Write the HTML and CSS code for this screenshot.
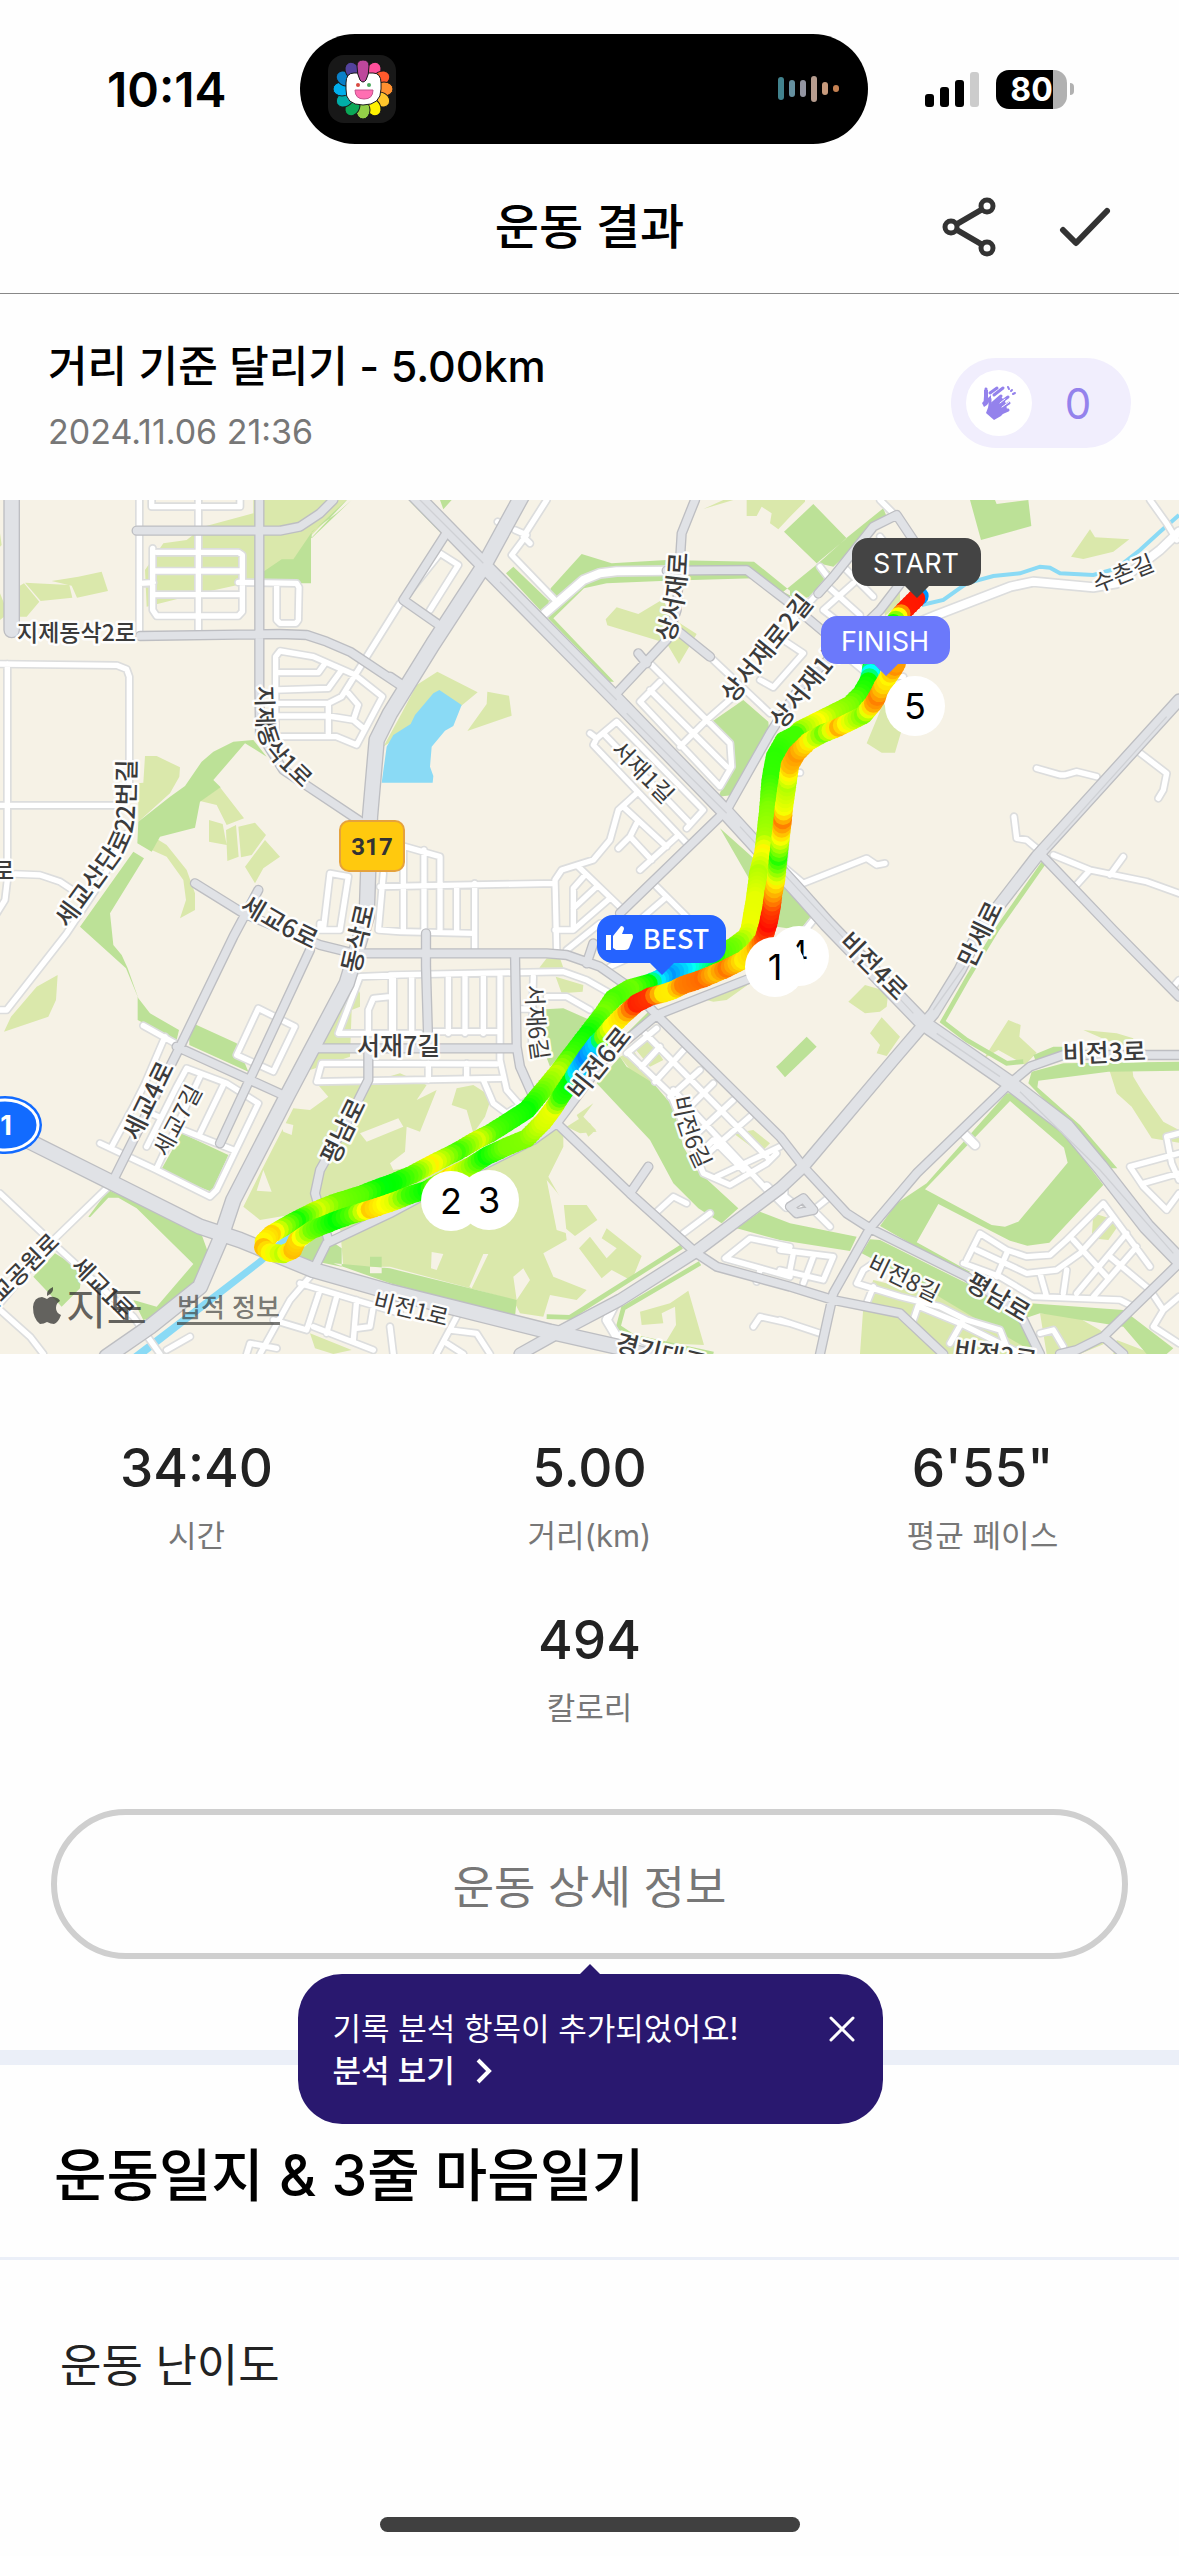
FILE: index.html
```html
<!DOCTYPE html>
<html lang="ko">
<head>
<meta charset="utf-8">
<meta name="viewport" content="width=device-width, initial-scale=1">
<title>운동 결과</title>
<link rel="stylesheet" href="styles.css">
</head>
<body>
<div class="screen">
  <div class="status">
    <span class="status-time">10:14</span>
    <div class="island">
      <svg class="island-app" viewBox="0 0 68 68" aria-hidden="true">
        <rect width="68" height="68" rx="16" fill="#181818"/>
        <g stroke="#181818" stroke-width="1">
          <ellipse cx="35" cy="13" rx="7" ry="9" fill="#ff4f9b" transform="rotate(30 35 34)"/>
          <ellipse cx="35" cy="13" rx="7" ry="9" fill="#ff5a2c" transform="rotate(60 35 34)"/>
          <ellipse cx="35" cy="13" rx="7" ry="9" fill="#ff9030" transform="rotate(90 35 34)"/>
          <ellipse cx="35" cy="13" rx="7" ry="9" fill="#ffc52c" transform="rotate(120 35 34)"/>
          <ellipse cx="35" cy="13" rx="7" ry="9" fill="#fff200" transform="rotate(150 35 34)"/>
          <ellipse cx="35" cy="13" rx="7" ry="9" fill="#93cf48" transform="rotate(180 35 34)"/>
          <ellipse cx="35" cy="13" rx="7" ry="9" fill="#0aa858" transform="rotate(210 35 34)"/>
          <ellipse cx="35" cy="13" rx="7" ry="9" fill="#00ada8" transform="rotate(240 35 34)"/>
          <ellipse cx="35" cy="13" rx="7" ry="9" fill="#00aeec" transform="rotate(270 35 34)"/>
          <ellipse cx="35" cy="13" rx="7" ry="9" fill="#0a80c8" transform="rotate(300 35 34)"/>
          <ellipse cx="35" cy="13" rx="7" ry="9" fill="#53429c" transform="rotate(330 35 34)"/>
          <path d="M18 28Q18 18 26 18H45Q53 18 53 28V34Q53 50 35 50T18 34Z" fill="#fff"/>
          <path d="M29 11Q29 5 35 5T41 11Q41 20 38 25Q35 29 32 25Q29 20 29 11Z" fill="#bd479b"/>
          <path d="M27 35H45Q45 44 36 44T27 35Z" fill="#ff6fb2" stroke="#c4528d"/>
        </g>
        <circle cx="30" cy="30" r="2" fill="#d84a40"/><circle cx="41" cy="30" r="2" fill="#4aa85c"/>
      </svg>
      <svg class="island-wave" viewBox="0 0 62 28" aria-hidden="true" fill="none" stroke-linecap="round" stroke-width="6">
        <path d="M3 5V22" stroke="#41828d"/><path d="M14 8V19" stroke="#6590a0"/><path d="M25 8V19" stroke="#9395a2"/>
        <path d="M36 4V24" stroke="#b69c8e"/><path d="M47 10V17" stroke="#c79a7c"/><path d="M58 13V14" stroke="#c58152"/>
      </svg>
    </div>
    <div class="status-right">
      <svg class="signal" viewBox="0 0 54 35" aria-hidden="true">
        <rect y="22" width="9" height="13" rx="3"/><rect x="15" y="15" width="9" height="20" rx="3"/>
        <rect x="30" y="8" width="9" height="27" rx="3"/><rect x="45" width="9" height="35" rx="3" fill="#ccc"/>
      </svg>
      <span class="battery">80</span><i class="battery-tip"></i>
    </div>
  </div>

  <header class="header">
    <h1>운동 결과</h1>
    <div class="header-actions">
      <button class="icon-button" type="button" aria-label="공유">
        <svg width="54" height="60" viewBox="0 0 54 60" fill="none" stroke="#333" stroke-width="6">
          <circle cx="9" cy="30" r="6" stroke-width="5"/><circle cx="45" cy="9" r="6" stroke-width="5"/><circle cx="45" cy="51" r="6" stroke-width="5"/>
          <path d="M15 27L39 13M15 33L39 47"/>
        </svg>
      </button>
      <button class="icon-button" type="button" aria-label="완료">
        <svg width="52" height="40" viewBox="0 0 52 40" fill="none" stroke="#333" stroke-width="6" stroke-linecap="round" stroke-linejoin="round"><path d="M4 23L17 36L48 4"/></svg>
      </button>
    </div>
  </header>

  <section class="summary">
    <div class="summary-text">
      <h2>거리 기준 달리기 - 5.00km</h2>
      <p>2024.11.06 21:36</p>
    </div>
    <button class="clap" type="button" aria-label="박수 0">
      <span class="clap-icon">
        <svg width="36" height="36" viewBox="0 0 36 36" fill="none" stroke="#9482ec" stroke-width="3" stroke-linecap="round" stroke-linejoin="round">
          <path d="M5 4L4 18M9 8L16 3M13 10L22 3"/>
          <path d="M3 5H7V13L10 10V14L6 20L3 22L1 18L3 16Z" fill="#9482ec" stroke="none"/>
          <path d="M9 14V22M12 18L20 11M16 20L27 12M19 24L28 18M20 28L27 25"/>
          <path d="M8 20L11 18L20 12L24 16L26 24L20 31L13 35L5 28Z" fill="#9482ec" stroke="none"/>
          <path d="M19 18L24 14M21 22L28 17" stroke="#fff" stroke-width="1"/>
          <path d="M27 2L28 4M31 5L30 6M34 8L32 9" stroke-width="2"/>
        </svg>
      </span>
      <span class="clap-count">0</span>
    </button>
  </section>

  <section class="map" aria-label="달리기 경로 지도">
    <svg class="map-canvas" viewBox="0 0 1179 854">
      <defs>
        <path id="minor" d="M418,0V400M455,-10V20H720V-10M595,0V405M458,145V330L470,348H715L727,335V165L715,157H470M460,213H720M460,284H720M418,250L460,248M715,247L890,250 897,262 895,360 888,370H840L830,360V255M0,492L350,496 380,508 388,530V850M22,492V1140L15,1200 -10,1240M0,916H350M45,1122L120,1125 180,1145 240,1185M0,1530L20,1530 200,1300 300,1150 380,1000M827,470V710H1010L1070,735 1147,590 1065,525 940,470 840,453ZM827,518H955L975,490M827,570L985,565 1025,510M827,610H985L1025,590 1200,310 1320,160 1375,195 1290,330M827,648H985L1060,660 1090,685M985,610V710M1045,580L1075,615 1060,660M970,1290L990,1120 1045,1130 1020,1290ZM1150,1120L1135,1290 1200,1295 1420,1300M1140,1160L1665,1150M1215,1040L1320,1070V1298M1210,1040V1290M1272,1050V1290M1370,1160V1290M1424,1150V1350M1640,0L1570,110 1590,130M1545,90L1580,105 1535,165 1665,300M1493,65L1510,72M1950,490L2190,730 2195,800 2160,860 1920,605 1980,545M1950,570L2180,800M2040,740L2120,660 2200,590M2140,480L2310,640M2280,540L2320,562 2410,460 2350,420M1770,700L1790,715 1850,665 2110,930 2060,985M1790,715L1780,735 2065,1035M1815,705L2065,965M1910,880L1855,930 1830,1020 1780,1080 1685,1110 1665,1140 1670,1350M1870,920L2000,1040M1910,970L1890,1010 1855,1045M1890,1010L1955,1080M2030,1010L1920,1110M1735,1100L1870,1230M1755,1125L1720,1165V1280M1790,1160L1720,1225M1830,1195L1720,1290H1665M1970,1160L2060,1250M2000,1190L1930,1250M2640,0L2680,40M2530,200L2620,290M2490,265L2580,345M2560,250L2470,330 2560,400M2640,110L2680,160M2460,200L2490,240 2380,360M3450,0L3500,70 3530,120M3110,805L3180,825H3195L3230,815 3290,830M3415,755L3500,820 3490,870 3475,895M3042,950L3050,1015 3080,1020 3110,1045M3160,1065L3270,1110 3440,1145 3537,1180M3370,1070L3330,1125M3270,1110L3225,1160M2655,1090L2630,1095 2600,1075 2410,1150 2350,1100M2400,818H2380M2370,850L2350,1100M2540,470L2600,520 2710,530M2440,1260L2400,1310M430,1577L525,1630M495,1610L435,1750 400,1820 335,1940M300,1930L470,2010 630,2090 650,2070 775,1810 680,1750 560,1705 530,1760 440,1940M600,1730L470,2005M670,1755L600,1900M430,1830L475,1850M550,1890L700,1950M775,1525L710,1665 820,1715 885,1580ZM0,2080L170,2240 400,2450 480,2562M325,2060L160,2220 0,2410M0,2430L90,2510 130,2562M1200,1425L1080,1430 1015,1600H1260M1175,1430V1600M1170,1490L1120,1495 1105,1530V1600M960,1270V1290H1020M1490,1692L965,1690 950,1745 1500,1735M930,2330L870,2400 780,2562M900,2350L1200,2440M960,2370L920,2490 820,2460M1010,2390L980,2500M1070,2400L1060,2520M1120,2420L1110,2480 1070,2485M940,2480L1120,2550M740,2562L750,2530 830,2545M570,2510L500,2550M1170,1425L1690,1415 1760,1440 1830,1480M1180,1430V1600M1235,1430V1600M1345,1430V1600M1395,1430V1600M1450,1430V1600M1500,1430V1680L1520,1770 1555,1810M1300,1595H1500M1285,1690V1740M1400,1690V1735M1450,1740L1480,1810 1520,1840 1600,1790M1600,1430L1595,1640M1560,1527H1600M1640,1490H1700L1770,1530M1830,1400L1940,1350M1700,1350L1800,1270M1885,1660L2010,1780 2060,1900 2110,2020 2190,2055 2300,1990 2330,1960M1935,1600L2310,1980M1880,1660L1970,1585M1925,1700L1980,1640M1965,1745L2060,1640M2010,1790L2100,1710M2040,1850L2140,1750M2070,1920L2200,1800M2100,1980L2250,1850M2150,2030L2340,1940M2020,1770L2320,2090M2100,1960L2140,1920 2230,2010M1960,2145L2020,2090 2060,2110M2050,2200L2130,2140M2370,2240L2250,2215 2175,2275 2370,2330M2280,2310L2270,2345M2260,2480L2280,2450 2370,2470M1370,2450L1310,2562M1350,2490L1430,2500 1470,2562M1170,2480L1180,2562M1340,2530L1390,2562M2440,2130L2490,2090M2440,2130L2490,2180M2340,2250L2500,2270 2470,2340 2340,2310M2380,2260L2370,2310M2440,2270L2410,2350M2340,2460L2460,2500M2620,2290L2590,2310 2570,2350 2700,2390 2820,2420 2900,2460 3000,2490 3020,2540M2620,2360L2600,2410M2760,2400L2740,2460M2760,2420L2880,2470 3060,2560M2890,2460L2850,2530M2900,2280L2940,2200 3020,2250 3080,2270 3150,2265 3200,2220 3310,2110 3450,2300M2890,2290L3000,2330 3100,2390 3360,2400 3400,2420M2930,2250L3080,2320 3170,2310 3240,2260 3330,2160M3020,2260L2990,2330M3120,2320L3140,2390M3200,2310L3190,2380M3220,2220L3320,2330M3280,2390L3410,2240M3330,2270L3450,2370 3490,2430 3460,2480 3537,2530M3230,2380L3380,2200M3490,2430L3537,2390M3537,1900L3500,1910 3515,1990 3537,2040M3537,1960L3390,2000 3430,2060 3500,2130 3537,2080M3430,2050L3537,2020M3120,2500L3160,2490 3190,2540M3520,1460L3537,1440"/>
        <path id="wide" d="M1635,340L1750,240 1800,220 1850,214 2010,212M2700,390L2810,345 3030,260 3100,245 3280,262 3350,250 3480,150 3537,95M2890,1900L2925,1935M1840,2420L1820,2460 1850,2510 1950,2562M2350,2060V2090L2400,2130M2300,2060L2360,2120"/>
        <path id="medium" d="M410,92H840L900,80 960,40 1000,0M778,0V560L780,700 850,810 1090,970M420,408L840,402 920,405 980,425 1050,455 1200,555M585,1150L730,1240 960,1335 1060,1360 1640,1360 1700,1365 1800,1400 1900,1470 1970,1545M775,1170L700,1310 540,1640 340,2040M930,1350L660,1930M530,1640L860,1790M1345,90L1210,300 1310,370M1170,530L1200,550M2085,0L2045,100 2040,180 2030,330 2000,420 1850,580M2000,212L2240,210 2370,310 2560,470M2030,390L2130,470M1915,460L1940,490M2310,700L2180,930 1860,1240M2310,700L2400,560 2640,330 2740,200M2740,120L2690,45 2620,80 2500,230 2455,280M1970,1545L1820,1670 1670,1870 1600,1920 1300,2070 1170,2140 980,2230 940,2310M2340,1400L1970,1545 2340,1910 2410,2000 2540,2140 2610,2185 2900,2330 3060,2440 3120,2562M1670,1870L1890,2080 2090,2260 2150,2300 2370,2360 2500,2400 2700,2440 2830,2562M3030,1750L2750,2020 2610,2185 2500,2380 2460,2562M3030,1750L3090,1700 3190,1665H3537M3120,1060L3340,1290 3537,1490M3537,2290L3310,2510 3230,2550 3180,2562M3310,2510L3370,2562M950,1645H1550M1278,1300V1400L1285,1640M1545,1360L1550,1640 1560,1700 1600,1790M1105,1645V1740L1050,1850 960,2010 945,2080 985,2220M1890,2080L1945,2000M1760,1390L1780,1330M2370,2120L2410,2095 2440,2130 2390,2140Z"/>
        <path id="avenue" d="M3537,600L3110,1070 2940,1290 2880,1410 2800,1540 2680,1680 2410,2000 2340,2065 2080,2260 1860,2400 1680,2495 1560,2562"/>
        <path id="trunk" d="M35,-20V390M1240,-20L1470,215 1850,600 2180,940 2400,1180 2480,1270 2770,1570 3030,1750 3200,1880 3300,2000 3440,2180 3537,2280M1570,-20L1450,200 1300,430 1170,640 1130,720 1110,950 1100,1250 1040,1450 860,1790 700,2100 660,2220 600,2360 450,2480 320,2570M60,1910L340,2050 600,2180 720,2220 940,2310 1170,2375 1650,2495 1850,2540 1950,2570"/>
        <path id="l1" d="M256,186L257,222Q259,246 274,261L308,294"/>
        <path id="l2" d="M68,429L124,352Q134,336 135,312L136,250"/>
        <path id="l3" d="M239,410L275,431L330,458"/>
        <path id="l4" d="M526,485L528,530L535,580"/>
        <path id="l5" d="M673,598Q678,636 706,686"/>
        <path id="l6" d="M672,143Q687,108 688,40"/>
      </defs>
      <g transform="scale(.33333333)">
        <rect width="3537" height="2562" fill="#f6f2e6"/>
        <path class="forest" d="M440,320L435,210 490,130 560,120 610,80 760,40V0H1040L930,110 880,180 780,240 600,280ZM75,248L208,255 217,293 122,303ZM155,243L235,230 305,215 324,273 231,293 215,257ZM52,262L72,250 118,305 80,350H52ZM0,100L5,135 0,140ZM0,280L12,310V350L0,360ZM435,768H470L540,802 538,830 510,880 415,965V850L430,848ZM600,903L660,862 732,955 680,975 650,915ZM627,960L668,972 680,1035 627,1025ZM678,990L708,975 716,1070 682,1083ZM715,980L765,968 798,1005 755,1065 723,1072ZM795,1020L840,1070 790,1105 765,1150 735,1100ZM430,1030L460,1010 500,1035 560,1110 585,1180V1230L540,1255 558,1200 550,1140 500,1070 455,1050ZM1150,740L1205,640 1250,555 1312,515 1433,577 1375,625 1300,700 1180,720ZM1462,575L1527,587 1535,647 1402,693 1460,612ZM1817,358L1850,322 1915,342 1990,297 2010,350 2090,402 2037,492 2000,430 1822,376ZM2240,0V48H2270L2285,20 2315,40 2310,70 2335,88 2370,50 2415,5V0ZM2110,27L2200,0 2170,0ZM3213,170L3270,88 3285,112 3388,118 3340,155 3250,177ZM2648,300L2700,250V310L2655,348ZM2600,730L2650,610 2705,690 2685,758H2645ZM2545,1505L2595,1455 2665,1475 2660,1520 2640,1535 2595,1540ZM2610,1600L2645,1552 2700,1610 2660,1668 2630,1660 2640,1635ZM2952,1675L3025,1560 3062,1575 3058,1610 3110,1658 3075,1695 2995,1650ZM3250,1590L3350,1600 3400,1615 3395,1640 3330,1625ZM3325,1700L3395,1690 3400,1730 3430,1780 3490,1865 3537,1890V1928L3455,1915 3395,1820 3350,1780ZM2580,2562L2590,2420 2620,2340 2860,2400 3000,2460 3100,2562ZM3120,2440L3230,2450 3300,2490 3340,2520 3240,2562H3140ZM3350,2520L3460,2562H3340ZM3280,2140L3363,2165 3325,2220 3275,2215ZM1618,1403L1640,1375H1680L1690,1403ZM1667,1430L1750,1455 1748,1475 1685,1480ZM1860,1670L1900,1650 1960,1745 1910,1735ZM2100,1495L2250,1450 2180,1500 2140,1505ZM730,2120L790,2000 880,1825 930,1830 985,1790 950,1750H1100L1200,1720 1280,1755 1250,1800 1310,1770 1260,1895 1220,1880 1215,1955 1170,1990 1180,2010 1420,1970 1600,1900 1690,1870V1940L1645,2030 1685,2100 1700,2220 1630,2260 1660,2330 1760,2370 1730,2400 1650,2385 1630,2450 1560,2440 1540,2400 1170,2300H1030L1020,2180 900,2140 780,2160ZM1355,1815L1370,1765 1420,1755 1475,1790 1455,1850 1420,1900 1400,1830ZM1690,2115H1760L1792,2160 1725,2208 1684,2175ZM1737,2245L1770,2210 1820,2275 1850,2245 1805,2215 1820,2185 1925,2268 1895,2342 1835,2310 1805,2335ZM1700,1880L1740,1855 1770,1870 1790,1895 1740,1900ZM1730,1845L1780,1810 1750,1850 1788,1890 1765,1910ZM1920,2435L2010,2410 2065,2372 2112,2535 1995,2530 2028,2475 2025,2420 1985,2440 1990,2470 1925,2475ZM33,1550L110,1460 173,1425 168,1500 145,1550 12,1595ZM930,1710L1000,1560 1060,1430 1080,1480V1520L1055,1530 1050,1670ZM930,2500L1055,2550 1000,2562 945,2545ZM2200,1900L2260,1890 2310,1930 2280,1960ZM1900,1640L1950,1620 1990,1680 1950,1700Z"/>
        <path class="land" d="M790,2010L815,2075 770,2072ZM840,1865L880,1875 875,1905 850,1895ZM1080,1900L1195,1855 1210,1880 1100,1925ZM1295,2256L1330,2262 1310,2310 1293,2305ZM1570,2305L1590,2340 1550,2400 1540,2330ZM1640,2040L1690,2100 1700,2200 1670,2190ZM1450,2262L1465,2262 1415,2365 1408,2360Z"/>
        <path class="park" fill-rule="evenodd" d="M790,250V215L845,178H880L933,100 1050,-10 933,115V250ZM1010,40L1055,0 935,115V95ZM415,965L510,890 555,858 605,785 640,755 700,725 760,720 800,770 735,730 640,840 662,862 600,905 585,983 480,1010 455,1055 412,1030ZM400,1055L432,1075 330,1240 340,1335 365,1365 383,1405 415,1495 450,1540 537,1590 530,1620 413,1560V1490L378,1405 240,1280ZM567,1575L585,1573 710,1630 745,1715 568,1635ZM1225,0L1340,100 1325,102ZM1320,0H1355L1330,28ZM1518,220L1540,200 1660,315 1625,335ZM1652,265L1745,162 1835,190 2000,180 2262,185 2370,272V300L2262,235 2000,242 1820,250 1752,265 1660,355 1842,545H1830L1640,350ZM2135,665L2230,600 2305,665 2310,720 2230,850 2200,885 2155,890 2195,800 2190,740ZM2160,985L2300,1110 2390,1180 2440,1240 2400,1290 2330,1280ZM2352,95L2440,12 2540,115 2450,190ZM2542,112L2650,25 2660,50 2500,200 2455,190ZM2350,275L2455,190 2490,215 2430,290 2395,300ZM2910,0H2985L2990,12 3085,0 3094,78 2943,120ZM2340,1690L2420,1610 2450,1640 2355,1732 2328,1700ZM3085,1750L3095,1715 3190,1690 3537,1685V1712L3325,1715 3115,1742 3112,1762 3240,1875 3352,2005H3335L3220,1890ZM3100,1665L3160,1640H3200V1660L3110,1690ZM3020,1780H3040L3200,1910 3310,2055 3148,2228 3082,2237 3030,2222 2815,2112 2750,2227 2910,2315 2895,2325 2640,2178 2690,2110 2780,2050ZM3030,1803L3192,1943 3203,1988 3055,2165 3015,2180 2975,2175 2775,2068ZM2210,2185L2280,2135 2370,2170 2570,2210 2550,2253 2340,2220ZM2585,2260L2610,2218 2640,2220 2900,2350 3090,2410 3370,2430 3520,2545 3500,2562H3440L3370,2480 3120,2440 3060,2460 3110,2530V2562L2900,2440 2700,2320ZM1635,1528L1690,1525 1770,1560 1730,1610 1650,1700 1635,1660ZM1790,1750L1860,1670 1880,1700 1960,1750 2020,1820 2050,1940 2090,2010 2215,2125 2165,2170 2095,2125 2020,2050 1950,1920ZM1880,1600L1960,1520 1990,1540 1850,1660ZM1000,2290L1170,2305 1550,2400 1545,2450 1170,2350ZM480,2015L545,1900 685,1965 635,2075ZM265,2150L325,2070 600,2190 625,2260 600,2340 500,2440 430,2460 400,2400 470,2420 580,2292 410,2125 355,2093H325L270,2152ZM100,2330L165,2260 245,2310 240,2365 185,2420ZM880,2270L960,2200 1025,2245V2300ZM1110,2270H1145V2320H1110Z"/>
        <path class="park-edge" d="M3130,1090L2990,1290 2905,1430 2828,1565 2900,1620 3020,1690 3070,1685M1640,2450L1710,2452 2045,2240M2100,2290L1870,2425 1855,2480 1900,2510 2140,2562"/>
        <path class="water" d="M1145,848L1160,740 1180,705 1232,672 1245,645 1300,580 1318,570 1385,615 1360,678 1335,692 1295,740 1290,800 1300,828 1298,848ZM400,2562H440L790,2290 910,2180 890,2175 770,2280 600,2410Z"/>
        <path class="stream" d="M2765,315L2830,300 2900,250 2980,228 3060,220 3120,200 3150,203 3180,220 3280,225 3350,205 3420,150 3480,95 3537,45"/>
        <use href="#minor" class="minor-case"/><use href="#wide" class="wide-case"/>
        <use href="#minor" class="minor-fill"/><use href="#wide" class="wide-fill"/>
        <use href="#medium" class="medium-case"/><use href="#avenue" class="avenue-case"/><use href="#trunk" class="trunk-case"/>
        <use href="#medium" class="medium-fill"/><use href="#avenue" class="avenue-fill"/><use href="#trunk" class="trunk-fill"/>
        <path class="median" d="M1240,-20L1450,190M1500,245L1850,600M1880,640L2180,940M2220,980L2740,1540M2810,1600L3000,1730M3060,1775L3300,2010 3520,2260M3500,650L3140,1050M2900,1390L2800,1530"/>
        <g id="route"></g>
      </g>

      <g class="labels">
        <text x="17" y="141">지제동삭2로</text>
        <text><textPath href="#l1">지제동삭1로</textPath></text>
        <text class="main"><textPath href="#l2">세교산단로22번길</textPath></text>
        <text x="-7" y="379">로</text>
        <text class="main"><textPath href="#l3">세교6로</textPath></text>
        <text class="main" transform="translate(359 474) rotate(-77)">동삭로</text>
        <text class="main" transform="translate(138 642) rotate(-64)">세교4로</text>
        <text class="minor" transform="translate(167 658) rotate(-62)">세교7길</text>
        <text class="main" transform="translate(336 666) rotate(-64)">평남로</text>
        <text class="main" x="357" y="555">서재7길</text>
        <text class="minor"><textPath href="#l4">서재6길</textPath></text>
        <text class="main" transform="translate(580 601) rotate(-51)">비전6로</text>
        <text class="minor"><textPath href="#l5">비전6길</textPath></text>
        <text class="main"><textPath href="#l6">상서재로</textPath></text>
        <text class="main" transform="translate(733 204) rotate(-51)">상서재로2길</text>
        <text class="main" transform="translate(782 230) rotate(-51)">상서재1길</text>
        <text class="minor" transform="translate(610 251) rotate(45)">서재1길</text>
        <text class="minor" transform="translate(1097 93) rotate(-22)">수촌길</text>
        <text class="main" transform="translate(973 469) rotate(-64)">만세로</text>
        <text class="main" transform="translate(838 443) rotate(45)">비전4로</text>
        <text class="main" transform="translate(1063 563) rotate(-2)">비전3로</text>
        <text class="minor" transform="translate(866 769) rotate(26)">비전8길</text>
        <text class="main" transform="translate(964 787) rotate(31)">평남로</text>
        <text class="main" transform="translate(953 858) rotate(8)">비전2로</text>
        <text class="main" transform="translate(614 851) rotate(14)">경기대로</text>
        <text class="minor" transform="translate(372 808) rotate(14)">비전1로</text>
        <text transform="translate(-14 818) rotate(-45)">세교공원로</text>
        <text transform="translate(70 767) rotate(45)">세교1로</text>
      </g>

      <g class="badges">
        <rect x="340" y="321" width="64" height="50" rx="9" fill="#ffc90e" stroke="#e5a23c" stroke-width="2"/>
        <text class="shield" x="372" y="355">317</text>
        <ellipse cx="5" cy="625" rx="37" ry="29" fill="#126bff"/>
        <ellipse cx="5" cy="625" rx="33" ry="25" fill="none" stroke="#fff" stroke-width="3"/>
        <text class="interstate" x="6" y="635">1</text>
      </g>

      <g class="pins">
        <circle cx="799" cy="456" r="30"/><text class="hidden-pin" x="798" y="464">4</text>
        <circle cx="775" cy="467" r="30"/><text x="775" y="480">1</text>
        <circle cx="489" cy="700" r="30"/><circle cx="451" cy="701" r="30"/>
        <text x="489" y="713">3</text><text x="451" y="714">2</text>
        <circle cx="915" cy="206" r="30"/><text x="915" y="219">5</text>
      </g>
      <g class="flags">
        <path fill="#444" d="M868,38H965a16,16 0 0 1 16,16V70a16,16 0 0 1 -16,16H929L917,98 905,86H868a16,16 0 0 1 -16,-16V54a16,16 0 0 1 16,-16Z"/>
        <text x="916" y="73">START</text>
        <path fill="#6b79fb" d="M837,116H934a16,16 0 0 1 16,16V148a16,16 0 0 1 -16,16H898L886,176 874,164H837a16,16 0 0 1 -16,-16V132a16,16 0 0 1 16,-16Z"/>
        <text x="885" y="151">FINISH</text>
        <path fill="#2563ff" d="M613,415H710a16,16 0 0 1 16,16V447a16,16 0 0 1 -16,16H674L662,475 650,463H613a16,16 0 0 1 -16,-16V431a16,16 0 0 1 16,-16Z"/>
        <path fill="#fff" d="M606,435H611V450H606ZM613,436L621,426Q624,426 624,429L622,434H632Q634,436 632,440L629,448Q628,450 625,450H616L613,448Z"/>
        <text class="best" x="676" y="449">BEST</text>
      </g>
    </svg>
    <div class="map-credit">
      <span class="maker">
        <svg width="30" height="38" viewBox="0 0 30 38" aria-hidden="true"><path d="M21 0Q22 6 15 9Q14 3 21 0ZM15 12Q18 9 22 10Q27 11 28 14Q24 16 24 21T29 28Q26 36 22 37Q19 37 15 35Q12 37 8 37Q1 32 1 20Q2 10 10 10Q13 11 15 12Z"/></svg>지도
      </span>
      <a class="legal" href="#legal">법적 정보</a>
    </div>
  </section>

  <dl class="stats">
    <div class="stat"><dt>시간</dt><dd>34:40</dd></div>
    <div class="stat"><dt>거리(km)</dt><dd>5.00</dd></div>
    <div class="stat"><dt>평균 페이스</dt><dd>6'55"</dd></div>
    <div class="stat stat-center"><dt>칼로리</dt><dd>494</dd></div>
  </dl>

  <div class="detail">
    <button class="detail-button" type="button">운동 상세 정보</button>
    <div class="tip" role="status">
      <div class="tip-text">
        <p>기록 분석 항목이 추가되었어요!</p>
        <a href="#analysis">분석 보기
          <svg width="18" height="26" viewBox="0 0 18 26" fill="none" stroke="#fff" stroke-width="4"><path d="M3 2L14 13L3 24"/></svg>
        </a>
      </div>
      <button class="tip-close" type="button" aria-label="닫기">
        <svg width="26" height="26" viewBox="0 0 26 26" fill="none" stroke="#fff" stroke-width="3" stroke-linecap="round"><path d="M2 2L24 24M24 2L2 24"/></svg>
      </button>
    </div>
  </div>

  <section class="journal">
    <h2>운동일지 &amp; 3줄 마음일기</h2>
    <h3>운동 난이도</h3>
  </section>
  <div class="home-bar"></div>
</div>
<script src="route.js"></script>
</body>
</html>
```
FILE: styles.css
```css
* { box-sizing: border-box; }
body {
  margin: 0;
  background: #fefefe;
  color: #000;
  font-family: Inter, "Noto Sans CJK KR", sans-serif;
}
h1, h2, h3, p, dl, dd { margin: 0; }
h1, h2, h3 { font-weight: 500; }
button { border: 0; padding: 0; background: none; font: inherit; color: inherit; }
svg { display: block; }
.screen { display: flex; flex-direction: column; min-height: 100vh; }

.status {
  display: grid;
  grid-template-columns: 1fr 568px 1fr;
  align-items: center;
  height: 178px;
  padding: 0 11px 0 0;
}
.status-time { padding-left: 107px; font-size: 48px; font-weight: 600; }
.island {
  display: flex;
  align-items: center;
  justify-content: space-between;
  height: 110px;
  padding: 0 28px;
  border-radius: 55px;
  background: #000;
}
.island-app { width: 68px; height: 68px; }
.island-wave { width: 62px; height: 28px; }
.status-right { display: flex; align-items: center; padding-left: 57px; }
.signal { width: 54px; height: 35px; }
.battery {
  width: 71px;
  height: 39px;
  margin-left: 17px;
  border-radius: 13px;
  background: linear-gradient(90deg, #000 57px, #b1b1b1 57px);
  color: #fff;
  font-size: 32px;
  font-weight: 700;
  line-height: 39px;
  text-align: center;
}
.battery-tip { width: 4px; height: 12px; margin-left: 3px; border-radius: 0 6px 6px 0; background: #b1b1b1; }

.header {
  display: grid;
  grid-template-columns: 1fr auto 1fr;
  align-items: center;
  height: 116px;
  padding-bottom: 18px;
  border-bottom: 1px solid #888;
}
.header h1 { grid-column: 2; font-size: 48px; line-height: 64px; }
.header-actions { display: flex; align-items: center; justify-content: flex-end; gap: 63px; padding-right: 68px; }

.summary {
  display: flex;
  justify-content: space-between;
  height: 206px;
  padding: 40px 48px 0;
}
.summary h2 { font-size: 43px; line-height: 64px; }
.summary p { margin-top: 10px; color: #777; font-size: 34px; line-height: 48px; }
.clap {
  display: flex;
  align-items: center;
  width: 180px;
  height: 90px;
  margin-top: 24px;
  padding: 0 7px 0 15px;
  border-radius: 45px;
  background: #f1eefd;
}
.clap-icon { display: grid; place-items: center; width: 66px; height: 66px; border-radius: 50%; background: #fff; }
.clap-count { flex: 1; color: #9482ec; font-size: 42px; text-align: center; }

.map { position: relative; overflow: hidden; }
.map-canvas { width: 100%; height: auto; }
.land { fill: #f6f2e6; }
.forest { fill: #dae8ab; }
.park { fill: #bce197; }
.park-edge { fill: none; stroke: #bce197; stroke-width: 14px; }
.water { fill: #8adaf5; }
.stream { fill: none; stroke: #8adaf5; stroke-width: 12px; }
.minor-case, .minor-fill, .wide-case, .wide-fill, .medium-case, .medium-fill,
.avenue-case, .avenue-fill, .trunk-case, .trunk-fill { fill: none; stroke-linejoin: round; stroke-linecap: round; }
.minor-case { stroke: #dcdddd; stroke-width: 26px; }
.minor-fill { stroke: #fff; stroke-width: 16px; }
.wide-case { stroke: #dcdddd; stroke-width: 34px; }
.wide-fill { stroke: #fff; stroke-width: 24px; }
.medium-case { stroke: #bdbec2; stroke-width: 31px; }
.medium-fill { stroke: #e0e2e6; stroke-width: 23px; }
.avenue-case { stroke: #bdbec2; stroke-width: 40px; }
.avenue-fill { stroke: #e0e2e6; stroke-width: 32px; }
.trunk-case { stroke: #bdbec2; stroke-width: 50px; }
.trunk-fill { stroke: #e0e2e6; stroke-width: 42px; }
.median { fill: none; stroke: #cfd1d5; stroke-width: 4px; }

.labels text {
  fill: #3b3b3b;
  stroke: #fffffff0;
  stroke-width: 5px;
  stroke-linejoin: round;
  paint-order: stroke;
  font-family: "Noto Sans CJK KR", sans-serif;
  font-size: 23px;
  font-weight: 500;
}
.labels .main { font-size: 25px; }
.labels .minor { font-weight: 400; }
.shield, .interstate, .pins text, .flags text { text-anchor: middle; }
.shield { fill: #333; font: 700 24px Roboto, sans-serif; }
.interstate { fill: #fff; font: 700 27px Inter, sans-serif; }
.pins circle { fill: #fff; }
.pins text { fill: #000; font-size: 36px; }
.pins .hidden-pin { font-size: 32px; }
.flags text { fill: #fff; font-size: 27px; }
.flags .best { font-family: "Noto Sans CJK KR", sans-serif; font-weight: 500; }

.map-credit {
  position: absolute;
  left: 32px;
  bottom: 20px;
  display: flex;
  align-items: center;
  gap: 30px;
  color: rgba(50, 50, 48, .75);
  font-family: "Noto Sans CJK KR", sans-serif;
}
.maker { display: flex; align-items: center; gap: 4px; font-size: 44px; line-height: 56px; }
.maker svg { fill: currentColor; }
.legal { color: rgba(50, 50, 48, .65); font-size: 26px; font-weight: 500; line-height: 36px; text-underline-offset: 5px; text-decoration-thickness: 3px; }

.stats { display: grid; grid-template-columns: repeat(3, 1fr); row-gap: 40px; padding-top: 78px; }
.stat { display: flex; flex-direction: column-reverse; align-items: center; }
.stat-center { grid-column: 2; }
.stat dd { color: #222; font-size: 53px; font-weight: 500; line-height: 72px; }
.stat dt { padding-top: 4px; color: #777; font-size: 31px; line-height: 56px; }

.detail { position: relative; padding: 73px 51px 91px; border-bottom: 15px solid #ebeff8; }
.detail-button {
  display: block;
  width: 100%;
  height: 150px;
  border: 6px solid #cfcfcf;
  border-radius: 75px;
  color: #777;
  font-size: 45px;
}
.tip {
  position: absolute;
  left: 50%;
  bottom: -74px;
  display: flex;
  align-items: flex-start;
  justify-content: space-between;
  width: 585px;
  height: 150px;
  margin-left: -292px;
  padding: 34px 28px 0 35px;
  border-radius: 44px;
  background: #29186f;
  color: #fff;
  font-size: 31px;
  line-height: 42px;
}
.tip::before {
  content: "";
  position: absolute;
  left: 50%;
  bottom: 100%;
  margin-left: -10px;
  border: solid transparent;
  border-width: 0 10px 10px;
  border-bottom-color: #29186f;
}
.tip a { display: flex; align-items: center; gap: 20px; color: inherit; font-weight: 500; text-decoration: none; }
.tip-close { margin-top: 8px; }

.journal h2 { padding: 70px 54px 40px; border-bottom: 3px solid #ebeff8; font-size: 57px; line-height: 82px; }
.journal h3 { padding: 72px 60px; color: #222; font-size: 45px; font-weight: 400; line-height: 68px; }
.home-bar { width: 420px; height: 15px; margin: auto auto 24px; border-radius: 8px; background: #404040; }
```
FILE: route.js
```js
// Track points: x, y and hue (0 = slowest, 200 = fastest)
const track = [
  [2758,288,205],[2748,296,5],[2712,332,6],[2695,350,60],[2680,370,115],[2650,440,118],[2615,500,118],[2612,520,180],
  [2605,545,118],[2585,580,110],[2550,615,92],[2490,645,80],[2450,665,60],[2400,690,82],[2385,705,105],
  [2352,722,105],[2325,770,110],[2312,840,108],[2305,930,90],[2295,1020,80],[2290,1060,58],[2275,1120,78],[2265,1200,66],
  [2250,1285,64],[2240,1310,70],[2200,1340,92],[2160,1360,100],[2100,1380,150],[2050,1405,185],[2000,1425,205],
  [1970,1440,185],[1945,1450,120],[1890,1465,95],[1840,1495,103],[1810,1540,92],[1760,1605,118],[1710,1670,105],
  [1670,1722,75],[1630,1770,92],[1580,1830,118],[1510,1875,108],[1470,1900,100],[1430,1920,70],[1370,1955,105],
  [1290,1995,57],[1240,2022,95],[1180,2048,118],[1140,2062,122],[1080,2085,100],[1000,2110,92],[950,2130,70],
  [890,2160,115],[850,2182,85],[815,2202,50],[792,2225,58],[790,2242,45],[810,2258,58],[850,2262,75],[878,2250,45],
  [892,2220,50],[935,2190,92],[1010,2160,120],[1060,2143,100],[1110,2128,48],[1180,2105,66],[1230,2085,105],
  [1280,2070,118],[1350,2030,52],[1410,2000,84],[1460,1968,118],[1520,1940,92],[1580,1915,90],[1630,1865,70],
  [1660,1825,65],[1685,1785,110],[1715,1740,120],[1730,1715,185],[1760,1670,208],[1790,1630,190],[1810,1610,95],
  [1835,1580,62],[1870,1545,52],[1910,1510,8],[1950,1490,12],[1990,1480,55],[2020,1470,56],[2050,1455,30],
  [2110,1435,25],[2150,1418,45],[2180,1405,28],[2230,1380,56],[2260,1355,50],[2290,1320,22],[2305,1270,3],
  [2315,1220,14],[2320,1180,35],[2328,1140,56],[2335,1070,112],[2342,1010,62],[2348,960,30],[2352,920,62],
  [2362,850,78],[2370,795,45],[2390,760,36],[2425,725,55],[2470,700,92],[2515,682,42],[2550,665,66],[2590,645,90],
  [2620,610,40],[2632,590,30],[2650,555,50],[2665,530,58],[2685,500,34],[2695,480,40]
];

const route = document.getElementById('route');
const addDot = (x, y, hue) => {
  const dot = document.createElementNS('http://www.w3.org/2000/svg', 'circle');
  dot.setAttribute('cx', x);
  dot.setAttribute('cy', y);
  dot.setAttribute('r', 28);
  dot.setAttribute('fill', `hsl(${hue} 100% 50%)`);
  route.appendChild(dot);
};

for (let i = 1; i < track.length; i++) {
  const [x1, y1, h1] = track[i - 1];
  const [x2, y2, h2] = track[i];
  const steps = Math.max(1, Math.round(Math.hypot(x2 - x1, y2 - y1) / 12));
  for (let s = 0; s < steps; s++) {
    const t = s / steps;
    addDot(x1 + (x2 - x1) * t, y1 + (y2 - y1) * t, h1 + (h2 - h1) * t);
  }
}
```
